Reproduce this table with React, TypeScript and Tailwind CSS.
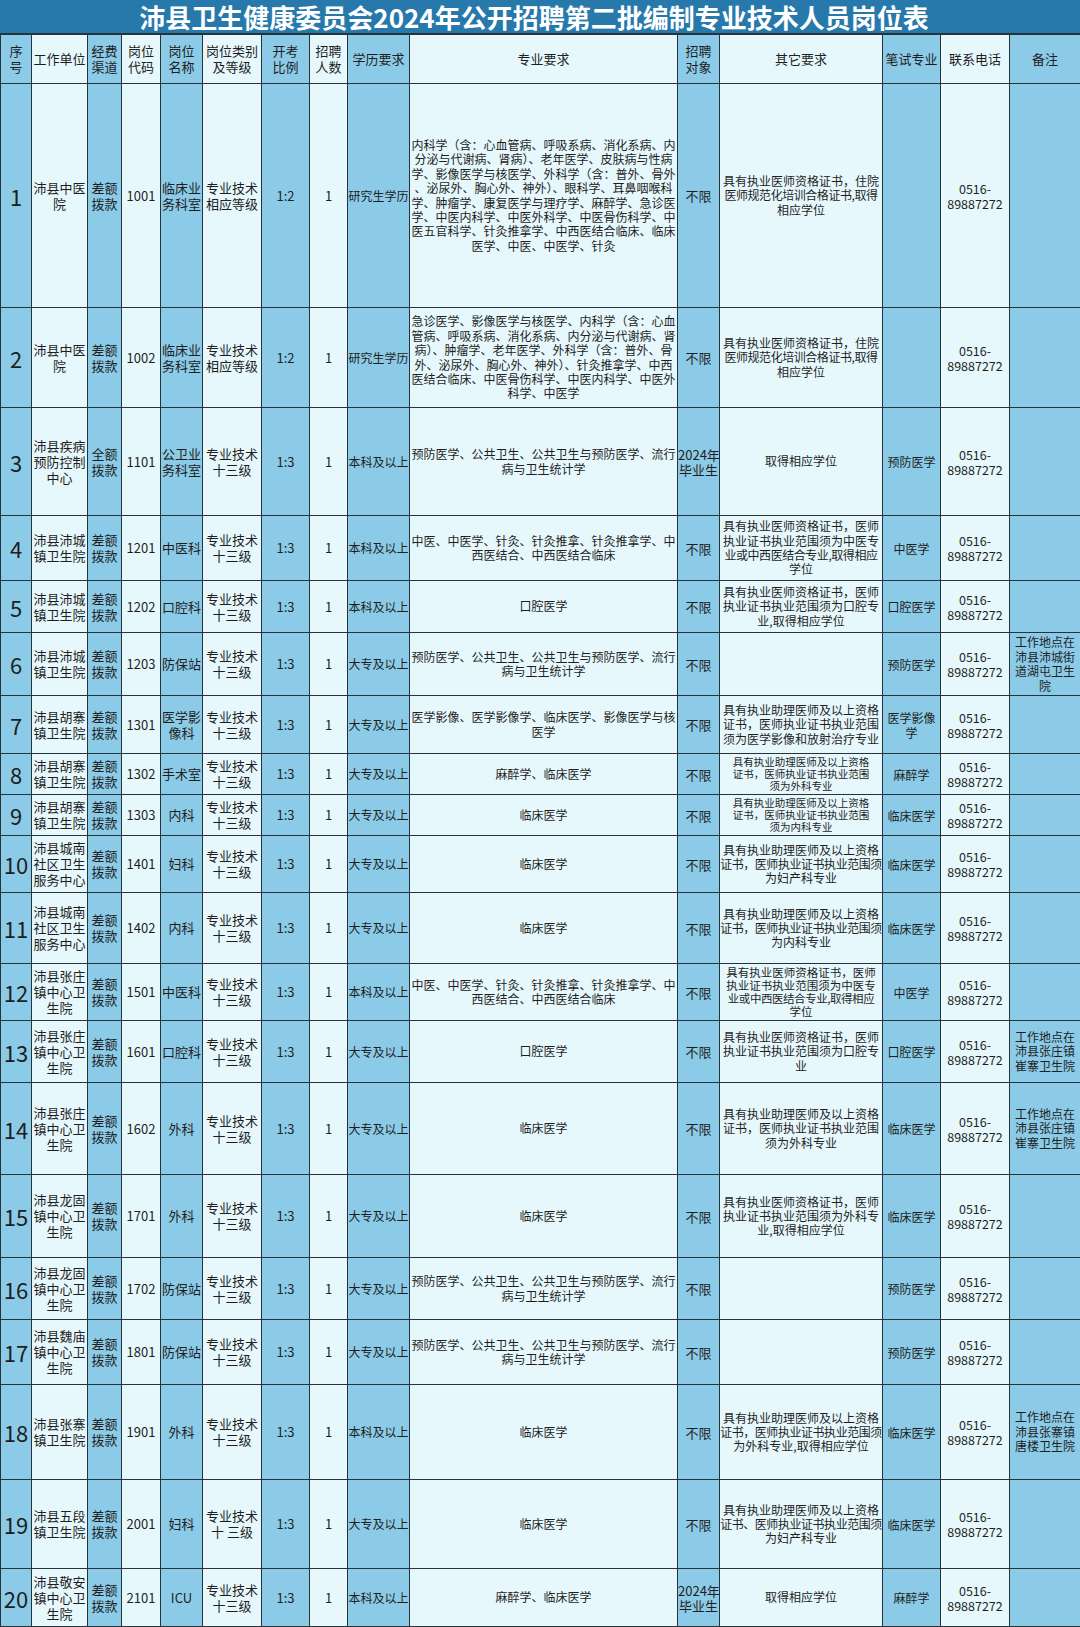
import type { ReactNode } from "react";

const PHONE = ["0516-", "89887272"];

const M_R1 = [
  "内科学（含：心血管病、呼吸系病、消化系病、内",
  "分泌与代谢病、肾病）、老年医学、皮肤病与性病",
  "学、影像医学与核医学、外科学（含：普外、骨外",
  "、泌尿外、胸心外、神外）、眼科学、耳鼻咽喉科",
  "学、肿瘤学、康复医学与理疗学、麻醉学、急诊医",
  "学、中医内科学、中医外科学、中医骨伤科学、中",
  "医五官科学、针灸推拿学、中西医结合临床、临床",
  "医学、中医、中医学、针灸",
];
const M_R2 = [
  "急诊医学、影像医学与核医学、内科学（含：心血",
  "管病、呼吸系病、消化系病、内分泌与代谢病、肾",
  "病）、肿瘤学、老年医学、外科学（含：普外、骨",
  "外、泌尿外、胸心外、神外）、针灸推拿学、中西",
  "医结合临床、中医骨伤科学、中医内科学、中医外",
  "科学、中医学",
];
const M_PREV = ["预防医学、公共卫生、公共卫生与预防医学、流行", "病与卫生统计学"];
const M_TCM = ["中医、中医学、针灸、针灸推拿、针灸推拿学、中", "西医结合、中西医结合临床"];
const M_IMG = ["医学影像、医学影像学、临床医学、影像医学与核", "医学"];

const O_RES = ["具有执业医师资格证书，住院", "医师规范化培训合格证书,取得", "相应学位"];
const O_TCM = ["具有执业医师资格证书，医师", "执业证书执业范围须为中医专", "业或中西医结合专业,取得相应", "学位"];
const O_DEG = ["取得相应学位"];

type Row = {
  unit: string;
  fund: string;
  code: string;
  post: string;
  grade: string;
  ratio: string;
  edu: string;
  major: string[];
  target: string[];
  other: string[];
  otherCls?: string;
  exam: string;
  note?: string;
  h: string;
};

const NOLIMIT = ["不限"];
const GRAD = ["2024年", "毕业生"];

const ROWS: Row[] = [
  { unit: "沛县中医院", fund: "差额拨款", code: "1001", post: "临床业务科室", grade: "相应等级", ratio: "1:2", edu: "研究生学历", major: M_R1, target: NOLIMIT, other: O_RES, exam: "", h: "h-[224px]" },
  { unit: "沛县中医院", fund: "差额拨款", code: "1002", post: "临床业务科室", grade: "相应等级", ratio: "1:2", edu: "研究生学历", major: M_R2, target: NOLIMIT, other: O_RES, exam: "", h: "h-[100px]" },
  { unit: "沛县疾病预防控制中心", fund: "全额拨款", code: "1101", post: "公卫业务科室", grade: "十三级", ratio: "1:3", edu: "本科及以上", major: M_PREV, target: GRAD, other: O_DEG, exam: "预防医学", h: "h-[108px]" },
  { unit: "沛县沛城镇卫生院", fund: "差额拨款", code: "1201", post: "中医科", grade: "十三级", ratio: "1:3", edu: "本科及以上", major: M_TCM, target: NOLIMIT, other: O_TCM, exam: "中医学", h: "h-[65px]" },
  { unit: "沛县沛城镇卫生院", fund: "差额拨款", code: "1202", post: "口腔科", grade: "十三级", ratio: "1:3", edu: "本科及以上", major: ["口腔医学"], target: NOLIMIT, other: ["具有执业医师资格证书，医师", "执业证书执业范围须为口腔专", "业,取得相应学位"], exam: "口腔医学", h: "h-[52px]" },
  { unit: "沛县沛城镇卫生院", fund: "差额拨款", code: "1203", post: "防保站", grade: "十三级", ratio: "1:3", edu: "大专及以上", major: M_PREV, target: NOLIMIT, other: [], exam: "预防医学", note: "工作地点在沛县沛城街道湖屯卫生院", h: "h-[63px]" },
  { unit: "沛县胡寨镇卫生院", fund: "差额拨款", code: "1301", post: "医学影像科", grade: "十三级", ratio: "1:3", edu: "大专及以上", major: M_IMG, target: NOLIMIT, other: ["具有执业助理医师及以上资格", "证书，医师执业证书执业范围", "须为医学影像和放射治疗专业"], exam: "医学影像学", h: "h-[58px]" },
  { unit: "沛县胡寨镇卫生院", fund: "差额拨款", code: "1302", post: "手术室", grade: "十三级", ratio: "1:3", edu: "大专及以上", major: ["麻醉学、临床医学"], target: NOLIMIT, other: ["具有执业助理医师及以上资格", "证书，医师执业证书执业范围", "须为外科专业"], otherCls: "text-[10.5px] leading-[12px]", exam: "麻醉学", h: "h-[41px]" },
  { unit: "沛县胡寨镇卫生院", fund: "差额拨款", code: "1303", post: "内科", grade: "十三级", ratio: "1:3", edu: "大专及以上", major: ["临床医学"], target: NOLIMIT, other: ["具有执业助理医师及以上资格", "证书，医师执业证书执业范围", "须为内科专业"], otherCls: "text-[10.5px] leading-[12px]", exam: "临床医学", h: "h-[41px]" },
  { unit: "沛县城南社区卫生服务中心", fund: "差额拨款", code: "1401", post: "妇科", grade: "十三级", ratio: "1:3", edu: "大专及以上", major: ["临床医学"], target: NOLIMIT, other: ["具有执业助理医师及以上资格", "证书，医师执业证书执业范围须", "为妇产科专业"], exam: "临床医学", h: "h-[57px]" },
  { unit: "沛县城南社区卫生服务中心", fund: "差额拨款", code: "1402", post: "内科", grade: "十三级", ratio: "1:3", edu: "大专及以上", major: ["临床医学"], target: NOLIMIT, other: ["具有执业助理医师及以上资格", "证书，医师执业证书执业范围须", "为内科专业"], exam: "临床医学", h: "h-[71px]" },
  { unit: "沛县张庄镇中心卫生院", fund: "差额拨款", code: "1501", post: "中医科", grade: "十三级", ratio: "1:3", edu: "本科及以上", major: M_TCM, target: NOLIMIT, other: O_TCM, otherCls: "text-[11.5px] leading-[13.2px]", exam: "中医学", h: "h-[57px]" },
  { unit: "沛县张庄镇中心卫生院", fund: "差额拨款", code: "1601", post: "口腔科", grade: "十三级", ratio: "1:3", edu: "大专及以上", major: ["口腔医学"], target: NOLIMIT, other: ["具有执业医师资格证书，医师", "执业证书执业范围须为口腔专", "业"], exam: "口腔医学", note: "工作地点在沛县张庄镇崔寨卫生院", h: "h-[62px]" },
  { unit: "沛县张庄镇中心卫生院", fund: "差额拨款", code: "1602", post: "外科", grade: "十三级", ratio: "1:3", edu: "大专及以上", major: ["临床医学"], target: NOLIMIT, other: ["具有执业助理医师及以上资格", "证书，医师执业证书执业范围", "须为外科专业"], exam: "临床医学", note: "工作地点在沛县张庄镇崔寨卫生院", h: "h-[92px]" },
  { unit: "沛县龙固镇中心卫生院", fund: "差额拨款", code: "1701", post: "外科", grade: "十三级", ratio: "1:3", edu: "大专及以上", major: ["临床医学"], target: NOLIMIT, other: ["具有执业医师资格证书，医师", "执业证书执业范围须为外科专", "业,取得相应学位"], exam: "临床医学", h: "h-[83px]" },
  { unit: "沛县龙固镇中心卫生院", fund: "差额拨款", code: "1702", post: "防保站", grade: "十三级", ratio: "1:3", edu: "大专及以上", major: M_PREV, target: NOLIMIT, other: [], exam: "预防医学", h: "h-[62px]" },
  { unit: "沛县魏庙镇中心卫生院", fund: "差额拨款", code: "1801", post: "防保站", grade: "十三级", ratio: "1:3", edu: "大专及以上", major: M_PREV, target: NOLIMIT, other: [], exam: "预防医学", h: "h-[65px]" },
  { unit: "沛县张寨镇卫生院", fund: "差额拨款", code: "1901", post: "外科", grade: "十三级", ratio: "1:3", edu: "本科及以上", major: ["临床医学"], target: NOLIMIT, other: ["具有执业助理医师及以上资格", "证书，医师执业证书执业范围须", "为外科专业,取得相应学位"], exam: "临床医学", note: "工作地点在沛县张寨镇唐楼卫生院", h: "h-[95px]" },
  { unit: "沛县五段镇卫生院", fund: "差额拨款", code: "2001", post: "妇科", grade: "十 三级", ratio: "1:3", edu: "大专及以上", major: ["临床医学"], target: NOLIMIT, other: ["具有执业助理医师及以上资格", "证书、医师执业证书执业范围须", "为妇产科专业"], exam: "临床医学", h: "h-[89px]" },
  { unit: "沛县敬安镇中心卫生院", fund: "差额拨款", code: "2101", post: "ICU", grade: "十三级", ratio: "1:3", edu: "本科及以上", major: ["麻醉学、临床医学"], target: GRAD, other: O_DEG, exam: "麻醉学", h: "h-[58px]" },
];

function chunk(s: string, n: number) {
  const out: string[] = [];
  for (let i = 0; i < s.length; i += n) out.push(s.slice(i, i + n));
  return out;
}

function Lines({ lines, tight = 99 }: { lines: string[]; tight?: number }) {
  return (
    <>
      {lines.map((l, i) => (
        <div key={i} className={l.length >= tight ? "whitespace-nowrap tracking-[-0.45px]" : "whitespace-nowrap"}>
          {l}
        </div>
      ))}
    </>
  );
}

const DARK = "bg-[#8ccbe7]";
const LIGHT = "bg-[#e7f8fc]";
const CELL = "border border-[#26333a] p-0 text-center align-middle";

function Td({ dark, className = "", children }: { dark?: boolean; className?: string; children?: ReactNode }) {
  return <td className={`${CELL} ${dark ? DARK : LIGHT} ${className}`}>{children}</td>;
}

const HEAD: { lines: string[]; dark: boolean }[] = [
  { lines: ["序", "号"], dark: true },
  { lines: ["工作单位"], dark: false },
  { lines: ["经费", "渠道"], dark: true },
  { lines: ["岗位", "代码"], dark: false },
  { lines: ["岗位", "名称"], dark: true },
  { lines: ["岗位类别", "及等级"], dark: false },
  { lines: ["开考", "比例"], dark: true },
  { lines: ["招聘", "人数"], dark: false },
  { lines: ["学历要求"], dark: true },
  { lines: ["专业要求"], dark: false },
  { lines: ["招聘", "对象"], dark: true },
  { lines: ["其它要求"], dark: false },
  { lines: ["笔试专业"], dark: true },
  { lines: ["联系电话"], dark: false },
  { lines: ["备注"], dark: true },
];

export default function App() {
  return (
    <div className="w-[1080px] bg-[#e7f8fc] font-['Noto_Sans_CJK_SC','Noto_Sans',sans-serif] text-[#1e1e1e]">
      <div className="flex h-[34px] items-center justify-center border-b border-[#26333a] bg-[#2779ab] pr-[12px]">
        <h1 className="text-[26px] leading-[32px] font-bold text-white">
          沛县卫生健康委员会2024年公开招聘第二批编制专业技术人员岗位表
        </h1>
      </div>
      <table className="w-[1080px] table-fixed border-collapse">
        <colgroup>
          <col className="w-[31px]" />
          <col className="w-[56px]" />
          <col className="w-[34px]" />
          <col className="w-[39px]" />
          <col className="w-[42px]" />
          <col className="w-[59px]" />
          <col className="w-[48px]" />
          <col className="w-[38px]" />
          <col className="w-[62px]" />
          <col className="w-[268px]" />
          <col className="w-[42px]" />
          <col className="w-[163px]" />
          <col className="w-[58px]" />
          <col className="w-[69px]" />
          <col className="w-[71px]" />
        </colgroup>
        <thead>
          <tr className="h-[49px]">
            {HEAD.map((h, i) => (
              <Td key={i} dark={h.dark} className="text-[13px] leading-[16px]">
                <Lines lines={h.lines} />
              </Td>
            ))}
          </tr>
        </thead>
        <tbody>
          {ROWS.map((r, i) => (
            <tr key={r.code} className={r.h}>
              <Td dark className="text-[22px] leading-none">{i + 1}</Td>
              <Td className="text-[13px] leading-[16px]">
                <Lines lines={chunk(r.unit, 4)} />
              </Td>
              <Td dark className="text-[13px] leading-[16px]">
                <Lines lines={chunk(r.fund, 2)} />
              </Td>
              <Td className="text-[13px]">{r.code}</Td>
              <Td dark className="text-[13px] leading-[16px]">
                <Lines lines={chunk(r.post, 3)} />
              </Td>
              <Td className="text-[13px] leading-[16px]">
                <Lines lines={["专业技术", r.grade]} />
              </Td>
              <Td dark className="text-[13px]">{r.ratio}</Td>
              <Td className="text-[13px]">1</Td>
              <Td dark className="text-[12px] whitespace-nowrap">{r.edu}</Td>
              <Td className="text-[12px] leading-[14.4px]">
                <Lines lines={r.major} tight={23} />
              </Td>
              <Td dark className="text-[13px] leading-[15px]">
                <Lines lines={r.target} />
              </Td>
              <Td className={r.otherCls ?? "text-[12px] leading-[14.3px]"}>
                <Lines lines={r.other} tight={14} />
              </Td>
              <Td dark className="text-[12px] leading-[15px]">
                {r.exam && <Lines lines={chunk(r.exam, 4)} />}
              </Td>
              <Td className="text-[12.5px] leading-[15px]">
                <Lines lines={PHONE} />
              </Td>
              <Td dark className="text-[12px] leading-[14.5px]">
                {r.note && <Lines lines={chunk(r.note, 5)} />}
              </Td>
            </tr>
          ))}
        </tbody>
      </table>
    </div>
  );
}
